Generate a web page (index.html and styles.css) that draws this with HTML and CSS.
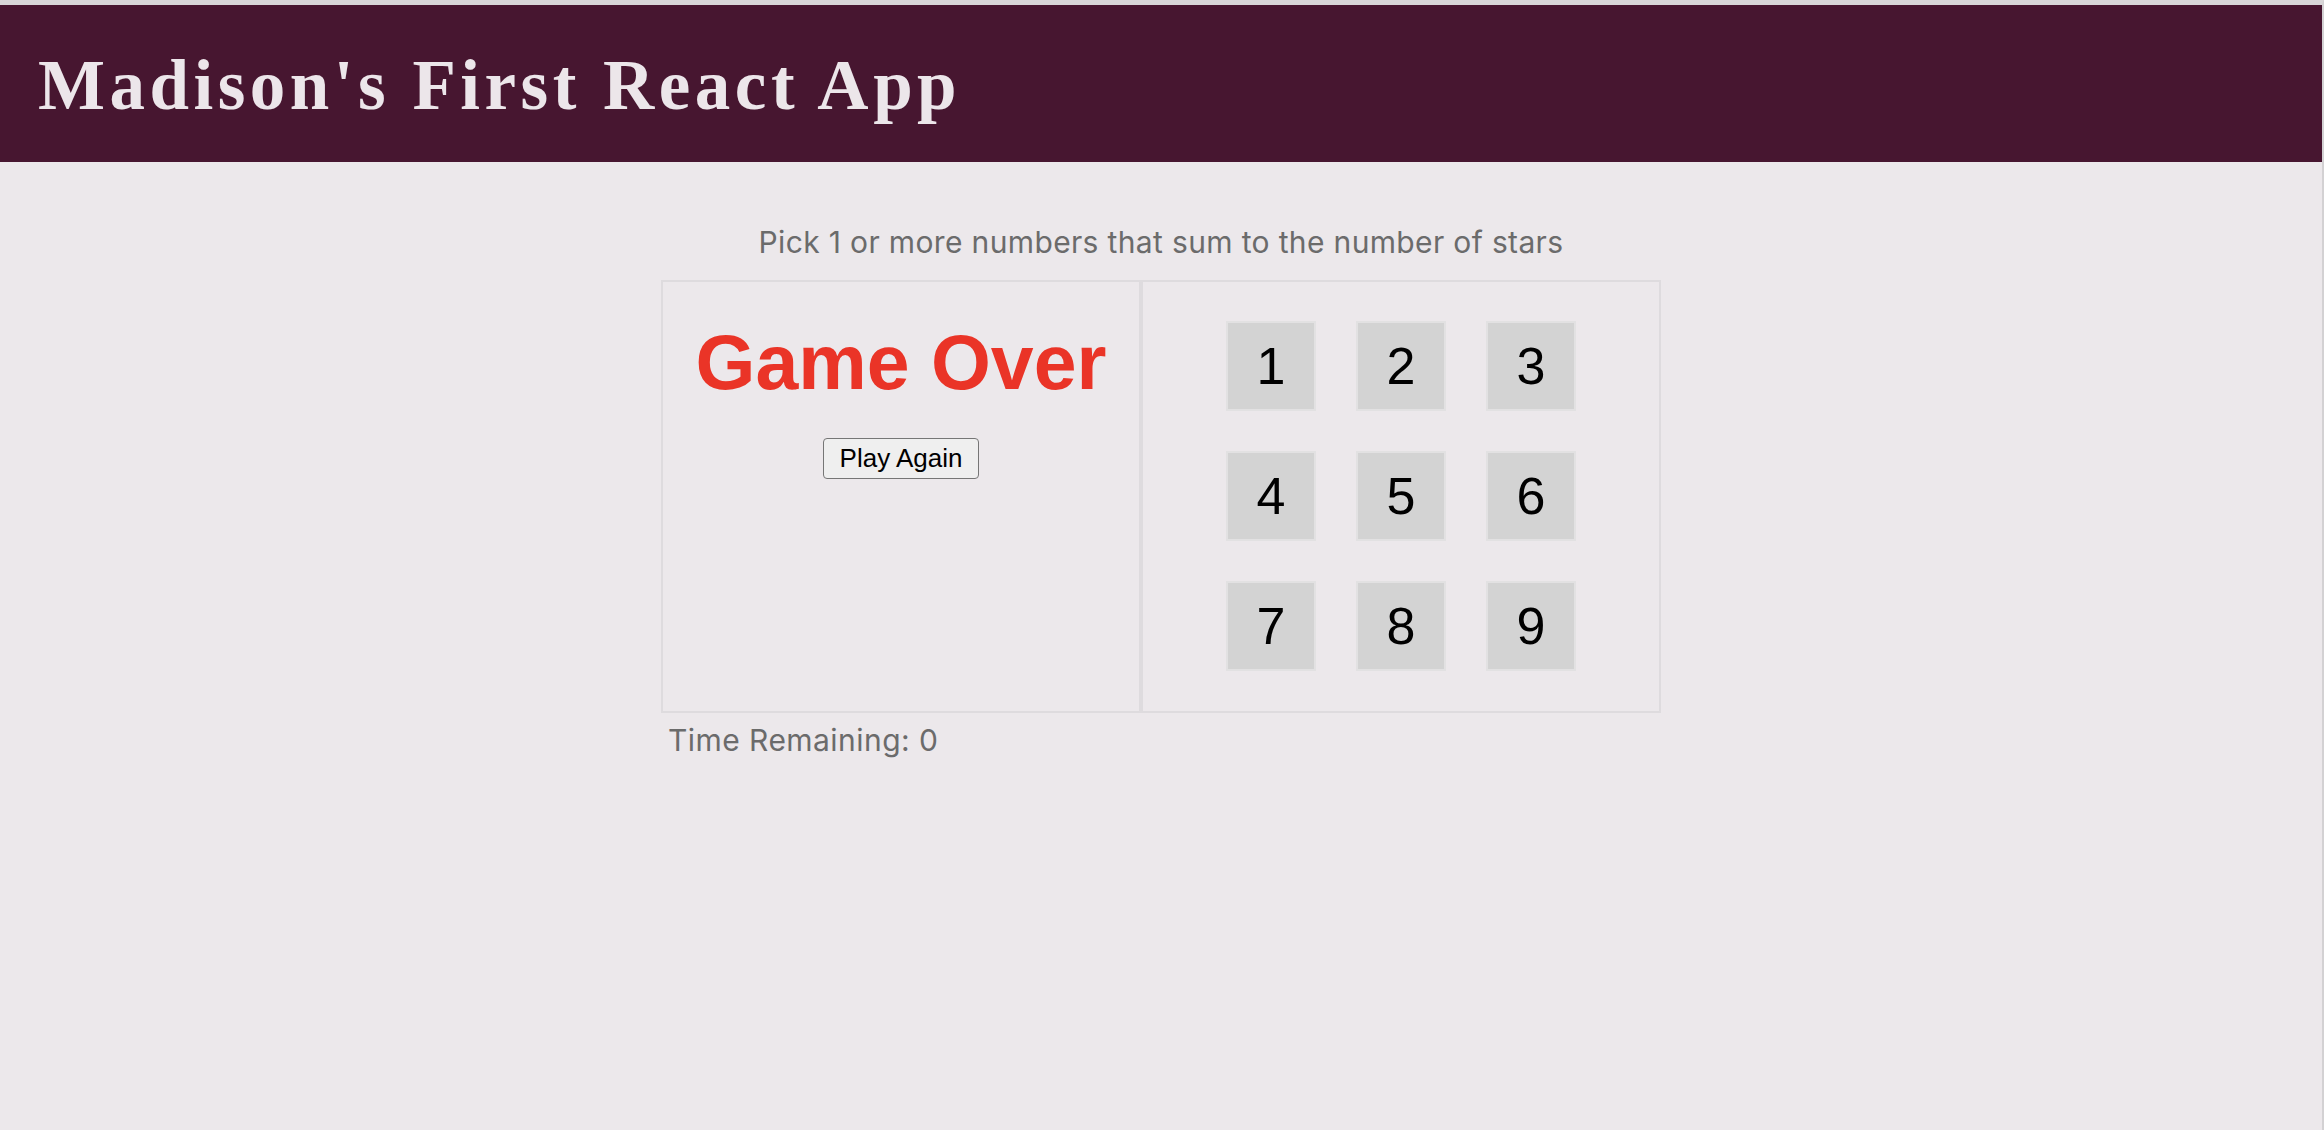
FILE: index.html
```html
<!DOCTYPE html>
<html lang="en">
<head>
<meta charset="utf-8">
<title>Madison's First React App</title>
<link rel="stylesheet" href="styles.css">
</head>
<body>
<header class="app-header">
  <h1 class="app-title">Madison's First React App</h1>
</header>
<main class="game">
  <p class="help">Pick 1 or more numbers that sum to the number of stars</p>
  <div class="board">
    <div class="panel left">
      <div class="game-done">
        <div class="message">Game Over</div>
        <button class="play-again">Play Again</button>
      </div>
    </div>
    <div class="panel right">
      <div class="numbers">
        <button class="number">1</button>
        <button class="number">2</button>
        <button class="number">3</button>
        <button class="number">4</button>
        <button class="number">5</button>
        <button class="number">6</button>
        <button class="number">7</button>
        <button class="number">8</button>
        <button class="number">9</button>
      </div>
    </div>
  </div>
  <div class="timer">Time Remaining: 0</div>
</main>
</body>
</html>
```
FILE: styles.css
```css
* { box-sizing: border-box; }
html, body { margin: 0; padding: 0; }
body {
  min-height: 100vh;
  background: #ece8eb;
  border-top: 5px solid #d8d6d8;
  border-right: 2px solid #d3d1d3;
  font-family: "Inter", "Noto Sans", sans-serif;
}
.app-header {
  height: 157px;
  background: #471630;
  display: flex;
  align-items: center;
  padding-left: 38px;
}
.app-title {
  margin: 0;
  font-family: "Liberation Serif", serif;
  font-weight: 700;
  font-size: 71px;
  letter-spacing: 4.5px;
  line-height: 1;
  color: #ece6ea;
  padding-top: 4px;
}
.game {
  width: 1000px;
  margin: 0 auto;
}
.help {
  margin: 62px 0 20px;
  text-align: center;
  font-size: 30px;
  letter-spacing: 0.35px;
  line-height: 36px;
  color: #6b6b6b;
}
.board {
  display: flex;
}
.panel {
  border: 2px solid #dedbde;
}
.left {
  width: 480px;
  display: flex;
  justify-content: center;
}
.right {
  width: 520px;
  padding: 39px 0 40px;
  display: flex;
  justify-content: center;
  align-items: center;
}
.game-done {
  display: flex;
  flex-direction: column;
  align-items: center;
  padding-top: 35px;
}
.message {
  font-family: "Liberation Sans", Arial, sans-serif;
  font-weight: 700;
  font-size: 77px;
  color: #ea3427;
  line-height: 90px;
}
.play-again {
  margin-top: 31px;
  font-family: "Liberation Sans", Arial, sans-serif;
  font-size: 26px;
  line-height: 30px;
  padding: 4px 16px 5px;
  color: #000;
  background: #efefef;
  border: 1.5px solid #767676;
  border-radius: 4px;
}
.numbers {
  display: grid;
  grid-template-columns: repeat(3, 90px);
  grid-auto-rows: 90px;
  gap: 40px;
}
.number {
  width: 90px;
  height: 90px;
  padding: 0;
  background: #d3d3d3;
  border: 2px solid #e2e1e2;
  font-family: "Liberation Sans", Arial, sans-serif;
  font-size: 52px;
  color: #000;
  display: flex;
  align-items: center;
  justify-content: center;
}
.timer {
  margin-top: 9px;
  padding-left: 7px;
  font-size: 30px;
  letter-spacing: 0.45px;
  line-height: 36px;
  color: #6b6b6b;
}
```
